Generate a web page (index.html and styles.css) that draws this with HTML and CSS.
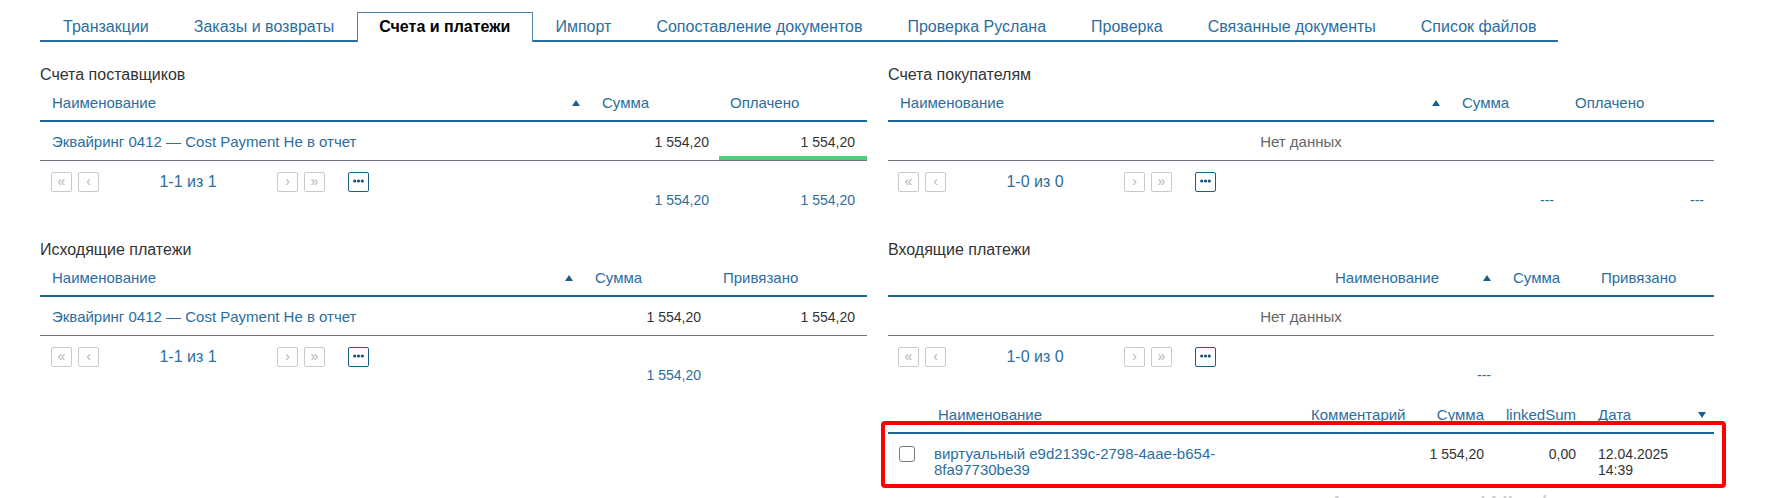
FILE: index.html
```html
<!DOCTYPE html>
<html lang="ru">
<head>
<meta charset="utf-8">
<title>Счета и платежи</title>
<link rel="stylesheet" href="styles.css">
</head>
<body>
<nav class="tabs">
  <span class="tab">Транзакции</span>
  <span class="tab">Заказы и возвраты</span>
  <span class="tab active">Счета и платежи</span>
  <span class="tab">Импорт</span>
  <span class="tab">Сопоставление документов</span>
  <span class="tab">Проверка Руслана</span>
  <span class="tab">Проверка</span>
  <span class="tab">Связанные документы</span>
  <span class="tab">Список файлов</span>
</nav>

<main class="content">
  <div class="col">
    <section class="section">
      <h3 class="sec-title">Счета поставщиков</h3>
      <div class="grid t1 thead">
        <div class="hc name">Наименование<span class="tri-up"></span></div>
        <div class="hc">Сумма</div>
        <div class="hc">Оплачено</div>
      </div>
      <div class="grid t1 trow">
        <div class="dc name link">Эквайринг 0412 — Cost Payment Не в отчет</div>
        <div class="dc num pr10">1 554,20</div>
        <div class="dc num pr12 paid">1 554,20</div>
      </div>
      <div class="pager">
        <span class="pbtn">«</span><span class="pbtn">‹</span>
        <span class="pinfo">1-1 из 1</span>
        <span class="pbtn">›</span><span class="pbtn">»</span>
        <span class="pmore"><svg width="11" height="4" viewBox="0 0 11 4"><circle cx="1.7" cy="2" r="1.6"/><circle cx="5.5" cy="2" r="1.6"/><circle cx="9.3" cy="2" r="1.6"/></svg></span>
      </div>
      <div class="grid t1 tfoot">
        <div></div>
        <div class="num pr10">1 554,20</div>
        <div class="num pr12">1 554,20</div>
      </div>
    </section>

    <section class="section">
      <h3 class="sec-title">Исходящие платежи</h3>
      <div class="grid t2 thead">
        <div class="hc name">Наименование<span class="tri-up"></span></div>
        <div class="hc">Сумма</div>
        <div class="hc">Привязано</div>
      </div>
      <div class="grid t2 trow">
        <div class="dc name link">Эквайринг 0412 — Cost Payment Не в отчет</div>
        <div class="dc num pr11">1 554,20</div>
        <div class="dc num pr12">1 554,20</div>
      </div>
      <div class="pager">
        <span class="pbtn">«</span><span class="pbtn">‹</span>
        <span class="pinfo">1-1 из 1</span>
        <span class="pbtn">›</span><span class="pbtn">»</span>
        <span class="pmore"><svg width="11" height="4" viewBox="0 0 11 4"><circle cx="1.7" cy="2" r="1.6"/><circle cx="5.5" cy="2" r="1.6"/><circle cx="9.3" cy="2" r="1.6"/></svg></span>
      </div>
      <div class="grid t2 tfoot">
        <div></div>
        <div class="num pr11">1 554,20</div>
        <div></div>
      </div>
    </section>
  </div>

  <div class="col right">
    <section class="section">
      <h3 class="sec-title">Счета покупателям</h3>
      <div class="grid t3 thead">
        <div class="hc name">Наименование<span class="tri-up"></span></div>
        <div class="hc">Сумма</div>
        <div class="hc">Оплачено</div>
      </div>
      <div class="trow empty">Нет данных</div>
      <div class="pager">
        <span class="pbtn">«</span><span class="pbtn">‹</span>
        <span class="pinfo">1-0 из 0</span>
        <span class="pbtn">›</span><span class="pbtn">»</span>
        <span class="pmore"><svg width="11" height="4" viewBox="0 0 11 4"><circle cx="1.7" cy="2" r="1.6"/><circle cx="5.5" cy="2" r="1.6"/><circle cx="9.3" cy="2" r="1.6"/></svg></span>
      </div>
      <div class="grid t3 tfoot">
        <div></div>
        <div class="num pr10">---</div>
        <div class="num pr10">---</div>
      </div>
    </section>

    <section class="section tight">
      <h3 class="sec-title">Входящие платежи</h3>
      <div class="grid t4 thead">
        <div></div>
        <div class="hc name">Наименование<span class="tri-up"></span></div>
        <div class="hc">Сумма</div>
        <div class="hc">Привязано</div>
      </div>
      <div class="trow empty">Нет данных</div>
      <div class="pager">
        <span class="pbtn">«</span><span class="pbtn">‹</span>
        <span class="pinfo">1-0 из 0</span>
        <span class="pbtn">›</span><span class="pbtn">»</span>
        <span class="pmore"><svg width="11" height="4" viewBox="0 0 11 4"><circle cx="1.7" cy="2" r="1.6"/><circle cx="5.5" cy="2" r="1.6"/><circle cx="9.3" cy="2" r="1.6"/></svg></span>
      </div>
      <div class="grid t4 tfoot">
        <div></div>
        <div class="num pr11">---</div>
        <div></div>
        <div></div>
      </div>
    </section>

    <section class="linked">
      <div class="grid t5 thead">
        <div></div>
        <div class="hc pl11">Наименование</div>
        <div class="hc num pr11">Комментарий</div>
        <div class="hc num pr11">Сумма</div>
        <div class="hc num pr11">linkedSum</div>
        <div class="hc date-h">Дата<span class="tri-down"></span></div>
      </div>
      <div class="grid t5 lrow">
        <div class="cbcell"><span class="checkbox"></span></div>
        <div class="lname link">виртуальный e9d2139c-2798-4aae-b654-8fa97730be39</div>
        <div></div>
        <div class="num pr11">1 554,20</div>
        <div class="num pr11">0,00</div>
        <div class="ldate">12.04.2025 14:39</div>
      </div>
      <div class="annot"></div>
    </section>
  </div>
</main>

<div class="watermark">Активация Windows</div>
</body>
</html>
```

FILE: styles.css
```css
* { box-sizing: border-box; }

body {
  margin: 0;
  font-family: "Liberation Sans", Arial, sans-serif;
  color: #333;
  background: #fff;
  position: relative;
  height: 498px;
  overflow: hidden;
}

.tabs {
  display: flex;
  margin: 12px 0 0 40px;
  width: 1518px;
  height: 30px;
  border-bottom: 2px solid #2b6e9e;
}

.tab {
  height: 28px;
  line-height: 28px;
  padding: 0 21.5px;
  font-size: 16px;
  color: #2b6e9e;
  border: 1px solid transparent;
  border-bottom: none;
  white-space: nowrap;
}

.tab:first-child { padding-left: 22px; }

.tab.active {
  height: 30px;
  border-color: #4f84aa;
  background: #fff;
  color: #000;
  font-weight: bold;
  margin-bottom: -2px;
}

.content {
  display: grid;
  grid-template-columns: 827px 826px;
  column-gap: 21px;
  padding-left: 40px;
  margin-top: 23px;
}

.col { display: flex; flex-direction: column; }

.section { margin-bottom: 32px; }
.section.tight { margin-bottom: 14px; }

.sec-title {
  margin: 0;
  font-size: 16px;
  font-weight: normal;
  line-height: 20px;
  height: 20px;
  color: #333;
}

.grid { display: grid; }
.t1 { grid-template-columns: 551px 128px 148px; }
.t2 { grid-template-columns: 544px 128px 155px; }
.t3 { grid-template-columns: 563px 113px 150px; }
.t4 { grid-template-columns: 435px 179px 88px 124px; }
.t5 { grid-template-columns: 39px 373px 116px 79px 92px 127px; }

.thead {
  height: 37px;
  align-items: center;
  border-bottom: 2px solid #1b6795;
  font-size: 15px;
  color: #2b6e9e;
}

.hc { padding-left: 11px; white-space: nowrap; }
.hc.name {
  display: flex;
  justify-content: space-between;
  align-items: center;
  padding: 0 11px 0 12px;
}

.tri-up {
  width: 0; height: 0;
  border-left: 4px solid transparent;
  border-right: 4px solid transparent;
  border-bottom: 6px solid #1b5f8c;
}

.tri-down {
  width: 0; height: 0;
  border-left: 4px solid transparent;
  border-right: 4px solid transparent;
  border-top: 6px solid #1b5f8c;
}

.trow {
  padding: 12px 0 10px;
  line-height: 16px;
  font-size: 14px;
  border-bottom: 1px solid #6c7683;
}

.trow.empty {
  text-align: center;
  color: #666;
  font-size: 15px;
}

.dc.name { padding-left: 12px; font-size: 15px; }
.link { color: #2b6e9e; }
.num { text-align: right; }
.pr10 { padding-right: 10px; }
.pr11 { padding-right: 11px; }
.pr12 { padding-right: 12px; }
.pl11 { padding-left: 11px; }

.paid {
  margin: -12px 0 -10px;
  padding-top: 12px;
  padding-bottom: 10px;
  box-shadow: inset 0 -4px 0 #4cd07d;
}

.pager {
  display: flex;
  align-items: center;
  margin-top: 11px;
  padding-left: 11px;
  height: 20px;
}

.right .pager { padding-left: 10px; }

.pbtn {
  width: 21px;
  height: 20px;
  border: 1px solid #c9c9c9;
  border-radius: 2px;
  color: #b4b4b4;
  font-size: 14px;
  line-height: 17px;
  text-align: center;
}
.pbtn + .pbtn { margin-left: 6px; }

.pinfo {
  width: 178px;
  text-align: center;
  font-size: 16px;
  color: #2b6e9e;
}

.pmore {
  width: 21px;
  height: 20px;
  margin-left: 23px;
  border: 1px solid #1b5f8c;
  border-radius: 2px;
  display: flex;
  align-items: center;
  justify-content: center;
  padding-bottom: 3px;
}
.pmore svg { fill: #1b4f78; display: block; }

.tfoot {
  line-height: 16px;
  font-size: 14px;
  color: #2b6e9e;
}

.linked {
  position: relative;
}

.linked .thead { height: 37px; }

.date-h {
  display: flex;
  justify-content: space-between;
  align-items: center;
  padding: 0 8px 0 11px;
}

.lrow {
  padding: 12px 0 8px;
  font-size: 14px;
  line-height: 16px;
  align-items: start;
}

.cbcell { padding-left: 11px; }
.checkbox {
  display: block;
  width: 16px;
  height: 16px;
  border: 1.5px solid #7a7a7a;
  border-radius: 3px;
  background: #fff;
}

.lname { padding: 0 7px; font-size: 15px; }
.ldate { padding: 0 11px; }

.annot {
  position: absolute;
  left: -7px;
  top: 24px;
  width: 845px;
  height: 67px;
  border: 4px solid #ff0000;
  border-radius: 4px;
  pointer-events: none;
}

.watermark {
  position: absolute;
  left: 1328px;
  top: 486px;
  font-size: 28px;
  color: #cfcfcf;
  white-space: nowrap;
  font-family: "Open Sans", "Liberation Sans", sans-serif;
}
```
